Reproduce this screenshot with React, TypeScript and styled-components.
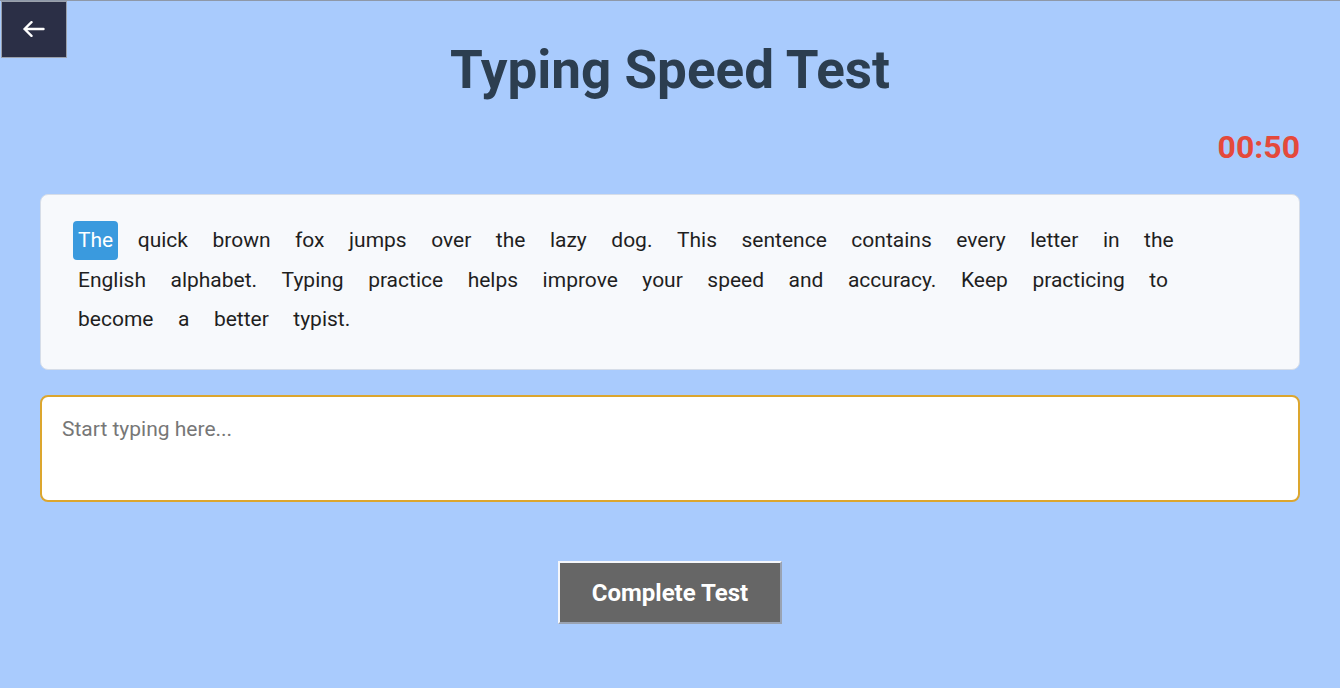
import styled, { createGlobalStyle } from 'styled-components';

const GlobalStyle = createGlobalStyle`
    html, body {
        margin: 0;
        padding: 0;
    }
    body {
        background: #a9cbfd;
        font-family: Roboto, 'Liberation Sans', sans-serif;
        border-top: 1px solid #8e98a8;
        min-height: 687px;
    }
`;

const passage =
    'The quick brown fox jumps over the lazy dog. This sentence contains every letter in the English alphabet. Typing practice helps improve your speed and accuracy. Keep practicing to become a better typist.';

export default function App() {
    const words = passage.split(' ');
    const current = 0;

    return (
        <>
            <GlobalStyle />
            <BackButton aria-label="Back">
                <svg width="22" height="16" viewBox="0 0 22 16" fill="none">
                    <path
                        d="M1.5 8H20.5M8.5 1.2L1.5 8l7 6.8"
                        stroke="#ffffff"
                        strokeWidth="2.4"
                        strokeLinecap="round"
                        strokeLinejoin="round"
                    />
                </svg>
            </BackButton>

            <Page>
                <Title>Typing Speed Test</Title>
                <TimerRow>
                    <Timer>00:50</Timer>
                </TimerRow>

                <PassageCard>
                    {words.map((word, i) => (
                        <Word key={i} $active={i === current}>
                            {word}
                        </Word>
                    ))}
                </PassageCard>

                <TypingInput placeholder="Start typing here..." autoFocus />

                <ButtonRow>
                    <CompleteButton>Complete Test</CompleteButton>
                </ButtonRow>
            </Page>
        </>
    );
}

const BackButton = styled.button`
    position: absolute;
    top: 1px;
    left: 1px;
    width: 66px;
    height: 57px;
    display: flex;
    align-items: center;
    justify-content: center;
    background: #2b2f46;
    border: 1px solid #9aa0ab;
    padding: 0 0 2px 0;
    cursor: pointer;
`;

const Page = styled.div`
    padding: 0 40px;
    display: flex;
    flex-direction: column;
`;

const Title = styled.h1`
    margin: 37px 0 0 0;
    text-align: center;
    font-size: 53px;
    font-weight: 700;
    line-height: 64px;
    color: #2c3e50;
`;

const TimerRow = styled.div`
    display: flex;
    justify-content: flex-end;
    margin-top: 26px;
`;

const Timer = styled.span`
    font-size: 32px;
    font-weight: 700;
    line-height: 38px;
    color: #e4493b;
`;

const PassageCard = styled.div`
    margin-top: 28px;
    background: #f7f9fc;
    border: 1px solid #d6dde8;
    border-radius: 8px;
    padding: 26px 32px 30px 32px;
    display: flex;
    flex-wrap: wrap;
    column-gap: 14.5px;
    row-gap: 0.5px;
`;

const Word = styled.span<{ $active?: boolean }>`
    display: inline-block;
    padding: 4px 5px;
    font-size: 21px;
    line-height: 31px;
    border-radius: 4px;
    color: ${p => (p.$active ? '#ffffff' : '#1f1f1f')};
    background: ${p => (p.$active ? '#3a9ade' : 'transparent')};
`;

const TypingInput = styled.textarea`
    margin-top: 25px;
    height: 107px;
    box-sizing: border-box;
    padding: 20px;
    border: 2px solid #dca62e;
    border-radius: 8px;
    background: #ffffff;
    font-family: Roboto, 'Liberation Sans', sans-serif;
    font-size: 21px;
    color: #222;
    resize: none;
    outline: none;

    &::placeholder {
        color: #777;
    }
`;

const ButtonRow = styled.div`
    display: flex;
    justify-content: center;
    margin-top: 59px;
`;

const CompleteButton = styled.button`
    width: 224px;
    height: 63px;
    background: #666666;
    color: #ffffff;
    font-family: Roboto, 'Liberation Sans', sans-serif;
    font-size: 24px;
    font-weight: 700;
    border: 2px solid;
    border-color: #f4f6fa #9aa3b2 #9aa3b2 #f4f6fa;
    cursor: pointer;
`;
